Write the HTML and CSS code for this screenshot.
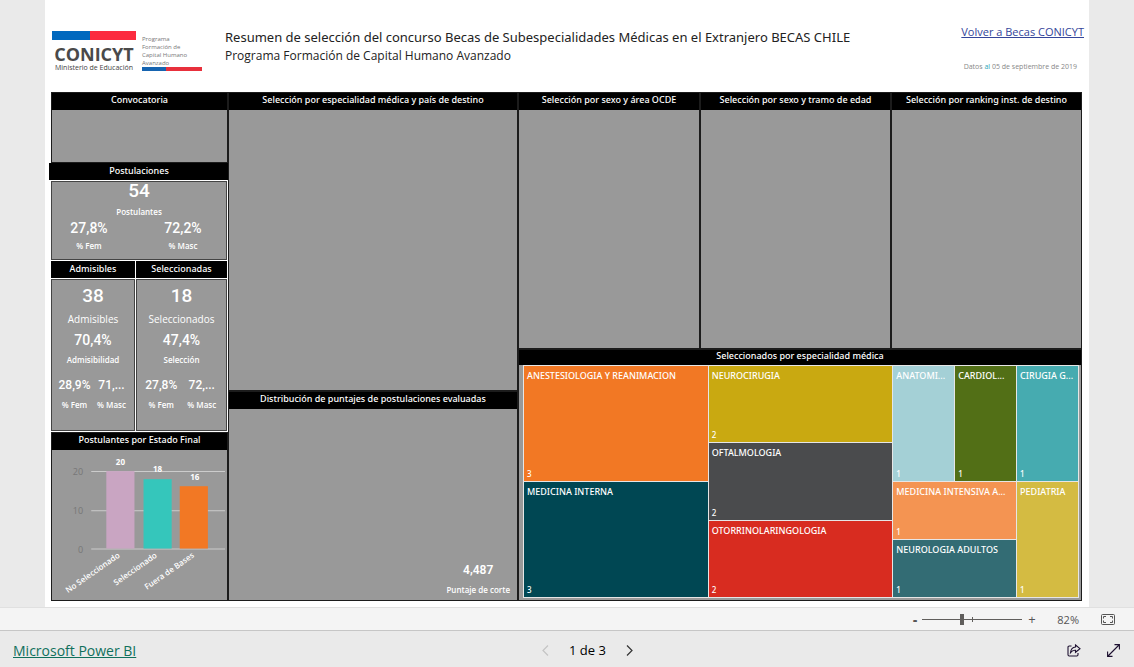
FILE: index.html
```html
<!DOCTYPE html>
<html lang="es">
<head>
<meta charset="utf-8">
<meta name="viewport" content="width=device-width, initial-scale=1">
<title>Becas de Subespecialidades Médicas</title>
<link rel="stylesheet" href="styles.css">
</head>
<body>
<main class="stage">
  <div class="report">
    <header class="header">
      <div class="logo">
        <div class="logo-main">
          <div class="flag"></div>
          <div class="logo-name">CONICYT</div>
          <div class="logo-sub">Ministerio de Educación</div>
        </div>
        <div class="logo-program">
          <div class="logo-lines">Programa<br>Formación de<br>Capital Humano<br>Avanzado</div>
          <div class="flag flag-thin"></div>
        </div>
      </div>
      <div class="titles">
        <h1 class="title">Resumen de selección del concurso Becas de Subespecialidades Médicas en el Extranjero BECAS CHILE</h1>
        <p class="subtitle">Programa Formación de Capital Humano Avanzado</p>
      </div>
      <div class="meta">
        <a class="back" href="#">Volver a Becas CONICYT</a>
        <p class="date">Datos <span class="date-accent">al</span> 05 de septiembre de 2019</p>
      </div>
    </header>

    <div class="dashboard">
      <div class="col-left">
        <section class="panel"><h2 class="head">Convocatoria</h2></section>
        <section class="postulaciones">
          <h2 class="head">Postulaciones</h2>
          <div class="card card-total">
            <div class="num-lg">54</div>
            <div class="label label-total">Postulantes</div>
            <div class="pair pair-wide">
              <div><div class="num-md num-tight">27,8%</div><div class="label">% Fem</div></div>
              <div><div class="num-md num-tight">72,2%</div><div class="label">% Masc</div></div>
            </div>
          </div>
        </section>
        <div class="split">
          <section class="stat">
            <h2 class="head">Admisibles</h2>
            <div class="card">
              <div class="num-lg">38</div>
              <div class="label-lg">Admisibles</div>
              <div class="num-md">70,4%</div>
              <div class="label">Admisibilidad</div>
              <div class="pair pair-small">
                <div><div class="num-sm">28,9%</div><div class="label">% Fem</div></div>
                <div><div class="num-sm">71,...</div><div class="label">% Masc</div></div>
              </div>
            </div>
          </section>
          <section class="stat">
            <h2 class="head">Seleccionadas</h2>
            <div class="card">
              <div class="num-lg">18</div>
              <div class="label-lg">Seleccionados</div>
              <div class="num-md">47,4%</div>
              <div class="label">Selección</div>
              <div class="pair pair-small">
                <div><div class="num-sm">27,8%</div><div class="label">% Fem</div></div>
                <div><div class="num-sm">72,...</div><div class="label">% Masc</div></div>
              </div>
            </div>
          </section>
        </div>
        <section class="panel panel-chart">
          <h2 class="head">Postulantes por Estado Final</h2>
          <svg class="chart" viewBox="0 0 174 149" role="img" aria-label="Postulantes por Estado Final">
            <g class="grid-lines"><path d="M39 21.5H172M39 60.500H172M39 98.500H172"/></g>
            <g class="axis"><text x="31" y="25">20</text><text x="31" y="64">10</text><text x="31" y="102">0</text></g>
            <rect x="54" y="21" width="28" height="77" fill="#c9a5c2"/>
            <rect x="91" y="29" width="28" height="69" fill="#35c6bb"/>
            <rect x="127" y="36" width="28" height="62" fill="#f27824"/>
            <g class="values"><text x="68" y="15">20</text><text x="105" y="22">18</text><text x="142" y="30">16</text></g>
            <g class="names">
              <text transform="translate(68 106) rotate(-35)">No Seleccionado</text>
              <text transform="translate(105 106) rotate(-35)">Seleccionado</text>
              <text transform="translate(142 106) rotate(-35)">Fuera de Bases</text>
            </g>
          </svg>
        </section>
      </div>

      <div class="col-mid">
        <section class="panel"><h2 class="head">Selección por especialidad médica y país de destino</h2></section>
        <section class="panel panel-scores">
          <h2 class="head">Distribución de puntajes de postulaciones evaluadas</h2>
          <div class="cutoff"><div class="num-sm">4,487</div><div class="label">Puntaje de corte</div></div>
        </section>
      </div>

      <div class="col-right">
        <div class="trio">
          <section class="panel"><h2 class="head">Selección por sexo y área OCDE</h2></section>
          <section class="panel"><h2 class="head">Selección por sexo y tramo de edad</h2></section>
          <section class="panel"><h2 class="head">Selección por ranking inst. de destino</h2></section>
        </div>
        <section class="panel panel-tree">
          <h2 class="head">Seleccionados por especialidad médica</h2>
          <div class="tree">
            <div class="tree-col">
              <div class="tile orange"><span class="tile-name">ANESTESIOLOGIA Y REANIMACION</span><span>3</span></div>
              <div class="tile petrol"><span class="tile-name">MEDICINA INTERNA</span><span>3</span></div>
            </div>
            <div class="tree-col">
              <div class="tile mustard"><span class="tile-name">NEUROCIRUGIA</span><span>2</span></div>
              <div class="tile charcoal"><span class="tile-name">OFTALMOLOGIA</span><span>2</span></div>
              <div class="tile red"><span class="tile-name">OTORRINOLARINGOLOGIA</span><span>2</span></div>
            </div>
            <div class="tree-grid">
              <div class="tile tall ice"><span class="tile-name">ANATOMI...</span><span>1</span></div>
              <div class="tile tall green"><span class="tile-name">CARDIOL...</span><span>1</span></div>
              <div class="tile tall teal"><span class="tile-name">CIRUGIA G...</span><span>1</span></div>
              <div class="tile wide peach"><span class="tile-name">MEDICINA INTENSIVA A...</span><span>1</span></div>
              <div class="tile tall sand"><span class="tile-name">PEDIATRIA</span><span>1</span></div>
              <div class="tile wide slate"><span class="tile-name">NEUROLOGIA ADULTOS</span><span>1</span></div>
            </div>
          </div>
        </section>
      </div>
    </div>
  </div>
</main>

<div class="zoombar">
  <button class="step step-minus" type="button" aria-label="Alejar">-</button>
  <input class="slider" type="range" min="0" max="100" value="40" aria-label="Zoom">
  <button class="step" type="button" aria-label="Acercar">+</button>
  <span class="percent">82%</span>
  <button class="icon" type="button" aria-label="Ajustar a la página">
    <svg width="14" height="11" viewBox="0 0 14 11" fill="none" stroke="#555"><rect x=".5" y=".5" width="13" height="10" rx="1"/><path d="M5 2.500H2.500V4.500M9 2.500H11.500V4.500M5 8.500H2.500V6.500M9 8.500H11.500V6.500"/></svg>
  </button>
</div>

<footer class="footer">
  <a class="brand" href="#">Microsoft Power BI</a>
  <nav class="pager" aria-label="Páginas">
    <button class="icon" type="button" aria-label="Anterior" disabled><svg width="7" height="11" viewBox="0 0 7 11" fill="none" stroke="#c4c4c4" stroke-width="1.200"><path d="M6 .5L1 5.500L6 10.500"/></svg></button>
    <span class="page">1 de 3</span>
    <button class="icon" type="button" aria-label="Siguiente"><svg width="7" height="11" viewBox="0 0 7 11" fill="none" stroke="#333" stroke-width="1.200"><path d="M1 .5L6 5.500L1 10.500"/></svg></button>
  </nav>
  <div class="actions">
    <button class="icon" type="button" aria-label="Compartir"><svg width="14" height="13" viewBox="0 0 14 13" fill="none" stroke="#1d1030" stroke-width="1.100"><path d="M4.500 2H2.200Q1 2 1 3.200V10.800Q1 12 2.200 12H9.800Q11 12 11 10.800V9"/><path d="M8.500 1L13 4.700L8.500 8.300V6.300Q5.500 6 3.500 8.700Q4 3.500 8.500 3Z"/></svg></button>
    <button class="icon" type="button" aria-label="Pantalla completa"><svg width="13" height="13" viewBox="0 0 13 13" fill="none" stroke="#1d1030" stroke-width="1.100"><path d="M1 12L12 1M7.500 .6H12.400V5.500M.6 7.500V12.400H5.500"/></svg></button>
  </div>
</footer>
</body>
</html>
```

FILE: styles.css
```css
* { box-sizing: border-box; }

body {
  margin: 0;
  min-height: 100vh;
  display: flex;
  flex-direction: column;
  background: #eaeaea;
  color: #222;
  font-family: "Open Sans", "Noto Sans", sans-serif;
}

h1, h2, p { margin: 0; font-weight: 400; }

button {
  padding: 0;
  border: 0;
  background: none;
  color: inherit;
  font: inherit;
}

.stage { flex: 1; display: flex; padding: 0 45px; }

.report {
  flex: 1;
  display: flex;
  flex-direction: column;
  padding: 0 7px 6px 6px;
  background: #fff;
}

/* Header */
.header {
  display: flex;
  align-items: flex-start;
  height: 92px;
  white-space: nowrap;
}

.logo { display: flex; gap: 6px; width: 174px; padding: 31px 0 0 1px; }
.logo-main { width: 84px; text-align: center; }
.flag { height: 9px; background: linear-gradient(to right, #0168be 45%, #fc2b3f 45%); }
.logo-name { color: #4a4a4a; font-size: 18px; font-weight: 700; line-height: 28px; height: 22px; }
.logo-sub { color: #444; font-size: 7px; line-height: 12px; }
.logo-program { width: 60px; padding-top: 4px; }
.logo-lines { color: #777; font-size: 6px; line-height: 8px; }
.flag-thin { height: 4px; background: linear-gradient(to right, #1664b0 40%, #e8303c 40%); }

.titles { flex: 1; padding-top: 27px; }
.title { font-family: "Noto Sans", sans-serif; font-size: 13px; line-height: 20px; }
.subtitle { font-size: 12px; line-height: 18px; }

.meta { padding-top: 24px; text-align: right; margin-right: -2px; }
.back { display: block; color: #34459a; font-size: 11px; line-height: 16px; }
.date { margin-top: 22px; padding-right: 7px; color: #888; font-size: 7px; line-height: 10px; }
.date-accent { color: #2aa6b8; }

/* Dashboard */
.dashboard {
  flex: 1;
  display: grid;
  grid-template-columns: 177fr 290fr 564fr;
}

.panel {
  display: flex;
  flex-direction: column;
  min-width: 0;
  border: 1px solid #1c1c1c;
  background: #999;
}

.head {
  height: 17px;
  background: #000;
  color: #fff;
  font-family: "Noto Sans", sans-serif;
  font-size: 9px;
  font-weight: 500;
  line-height: 15px;
  text-align: center;
  white-space: nowrap;
}
.panel .head { line-height: 13px; }
.panel-tree .head { height: 15px; line-height: 11px; }

.col-left { display: grid; grid-template-rows: 71fr 98fr 171fr 169fr; min-width: 0; }
.postulaciones { display: flex; flex-direction: column; margin: 0 0 1px; }
.postulaciones .head { margin: 0 -1px 0 -2px; }

.card {
  flex: 1;
  padding-top: 4px;
  border: 1px solid #444;
  background: #999;
  color: #fff;
  text-align: center;
  white-space: nowrap;
}
.card-total { margin: 1px 1px 0 0; padding-top: 0; }
.split {
  display: grid;
  grid-template-columns: 84fr 91fr;
  gap: 1px;
  padding: 0 1px 1px 0;
}
.stat { display: flex; flex-direction: column; gap: 1px; min-width: 0; }

.num-lg, .num-md, .num-sm { color: #fff; font-family: Roboto, sans-serif; font-weight: 500; line-height: 20px; }
.num-lg { font-size: 19px; line-height: 24px; }
.num-md { font-size: 14px; }
.num-sm { font-size: 12px; }
.num-tight { line-height: 16px; }
.label { color: #fff; font-size: 8px; font-weight: 600; line-height: 20px; }
.card-total .num-lg { line-height: 18px; }
.label-total { margin-top: 4px; line-height: 16px; }
.label-lg { font-size: 10px; font-weight: 500; line-height: 22px; }
.pair { display: grid; grid-template-columns: 1fr 1fr; }
.pair-wide { grid-template-columns: 74fr 86fr; gap: 14px; }
.pair-small { padding: 5px 4px 0; }

.chart { display: block; width: 100%; }
.grid-lines { stroke: #ccc; stroke-width: 1; }
.axis text { fill: #777; font-size: 9px; text-anchor: end; }
.values text { fill: #fff; font-size: 8px; font-weight: 700; text-anchor: middle; }
.names text { fill: #fff; font-size: 8px; font-weight: 600; text-anchor: end; }

.col-mid { display: grid; grid-template-rows: 299fr 210fr; min-width: 0; }
.panel-scores { justify-content: space-between; }
.cutoff { align-self: flex-end; padding-right: 7px; text-align: center; }
.cutoff .num-sm { font-weight: 600; }

.col-right { display: grid; grid-template-rows: 257fr 252fr; min-width: 0; }
.trio { display: grid; grid-template-columns: 182fr 191fr 191fr; min-width: 0; }

/* Treemap */
.tree {
  flex: 1;
  display: grid;
  grid-template-columns: 184fr 184fr 185fr;
  gap: 1px;
  margin: 0 2px 2px 4px;
  padding: 1px;
  background: #e6e6e6;
}
.tree-col { display: flex; flex-direction: column; gap: 1px; min-width: 0; }
.tree-grid {
  display: grid;
  grid-template-columns: repeat(3, minmax(0, 1fr));
  grid-template-rows: repeat(4, 1fr);
  gap: 1px;
}
.tile {
  flex: 1;
  display: flex;
  flex-direction: column;
  justify-content: space-between;
  min-width: 0;
  padding: 3px 0 1px 3px;
  color: #fff;
  font-family: "Noto Sans", sans-serif;
  font-size: 8px;
  font-weight: 500;
  line-height: 12px;
}
.tile-name {
  font-size: 9px;
  line-height: 14px;
  white-space: nowrap;
}
.tall { grid-row: span 2; }
.wide { grid-column: 1 / span 2; }
.orange { background: #f27824; }
.petrol { background: #004753; }
.mustard { background: #c9a911; }
.charcoal { background: #4a4b4d; }
.red { background: #d82c20; }
.ice { background: #a4d0d6; }
.green { background: #526f16; }
.teal { background: #46abb0; }
.peach { background: #f49452; }
.sand { background: #d4bb42; }
.slate { background: #336c74; }

/* Zoom bar and footer */
.zoombar {
  display: flex;
  align-items: center;
  justify-content: flex-end;
  height: 24px;
  padding-right: 19px;
  border-top: 1px solid #e0e0e0;
  border-bottom: 1px solid #c6c6c6;
  background: #f4f4f4;
  color: #555;
  font-size: 12px;
}
.step { width: 14px; line-height: 20px; text-align: center; font-size: 13px; }
.step-minus { font-weight: 800; }
.slider {
  -webkit-appearance: none;
  appearance: none;
  width: 100px;
  height: 11px;
  margin: 0 3px 0 0;
  background:
    linear-gradient(#605e5c, #605e5c) 50% 50% / 1px 5px no-repeat,
    linear-gradient(#605e5c, #605e5c) 0 50% / 100% 1px no-repeat;
}
.slider::-webkit-slider-thumb {
  -webkit-appearance: none;
  width: 4px;
  height: 11px;
  background: #605e5c;
}
.percent { width: 43px; padding-right: 3px; text-align: right; font-size: 11px; }
.icon { display: flex; }
.zoombar .icon { margin-left: 19px; }

.footer {
  display: grid;
  grid-template-columns: 1fr auto 1fr;
  align-items: center;
  height: 36px;
  padding: 2px 14px 0 13px;
}
.brand { color: #10705c; font-size: 14px; }
.pager { display: flex; align-items: center; gap: 20px; padding-left: 42px; }
.page { color: #000; font-size: 13px; }
.actions { display: flex; justify-content: flex-end; align-items: center; gap: 26px; }
```
